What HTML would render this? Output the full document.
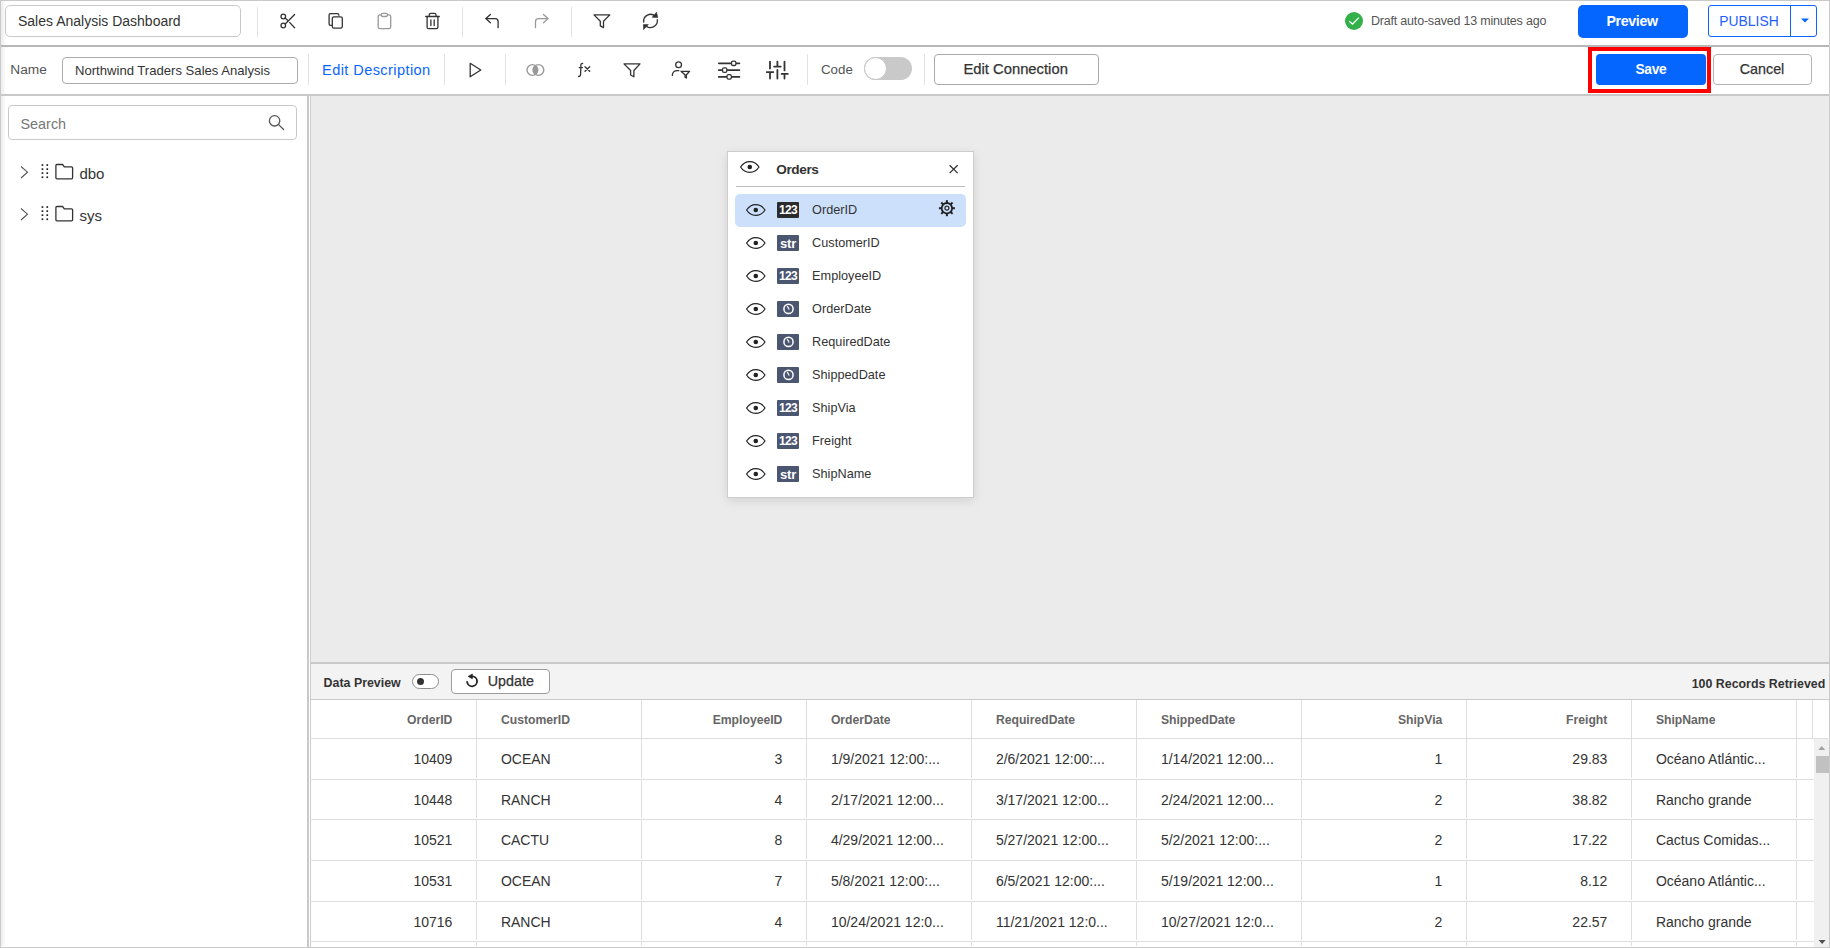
<!DOCTYPE html>
<html><head><meta charset="utf-8">
<style>
*{box-sizing:border-box;margin:0;padding:0}
html,body{width:1830px;height:948px;overflow:hidden;background:#fff;font-family:"Liberation Sans",sans-serif;color:#333}
.a{position:absolute;overflow:visible}
.t{position:absolute;white-space:nowrap;line-height:1}
</style></head><body>
<div class="a" style="left:0px;top:0px;width:1830px;height:948px;background:#fff"></div>
<div class="a" style="left:0px;top:0px;width:1830px;height:1px;background:#c9c9c9"></div>
<div class="a" style="left:0px;top:0px;width:1px;height:948px;background:#c9c9c9"></div>
<div class="a" style="left:1829px;top:0px;width:1px;height:948px;background:#c9c9c9"></div>
<div class="a" style="left:0px;top:947px;width:1830px;height:1px;background:#c9c9c9"></div>
<div class="a" style="left:1px;top:1px;width:5px;height:945px;background:linear-gradient(90deg,#ececec,#fff)"></div>
<div class="a" style="left:5px;top:5px;width:236px;height:32px;border:1px solid #c9c9c9;border-radius:5px;background:#fff"></div>
<div class="t" style="left:18.00px;top:13.95px;font-size:14px;font-weight:400;color:#333;">Sales Analysis Dashboard</div>
<div class="a" style="left:257px;top:7px;width:1px;height:30px;background:#e2e2e2"></div>
<div class="a" style="left:462px;top:7px;width:1px;height:30px;background:#e2e2e2"></div>
<div class="a" style="left:571px;top:7px;width:1px;height:30px;background:#e2e2e2"></div>
<svg class="a" style="left:276px;top:8px" width="24" height="26" viewBox="0 0 24 26"><g fill="none" stroke="#333" stroke-width="1.3" stroke-linecap="round" stroke-linejoin="round"><circle cx="7.3" cy="8.5" r="2.3"/><circle cx="7.3" cy="17.5" r="2.3"/><path d="M9.2 16 L18.6 6.5"/><path d="M9.2 10 L11.6 12.2"/><path d="M13.6 14.4 L18.6 19.7"/></g></svg>
<svg class="a" style="left:324px;top:8px" width="24" height="26" viewBox="0 0 24 26"><g fill="none" stroke="#333" stroke-width="1.3" stroke-linecap="round" stroke-linejoin="round"><path d="M7.7 17.4 H6.5 Q5.1 17.4 5.1 16 V7 Q5.1 5.7 6.4 5.7 H13.6 Q14.9 5.7 14.9 7.3"/><rect x="8.3" y="8.9" width="10" height="11.2" rx="1.6"/></g></svg>
<svg class="a" style="left:372px;top:8px" width="24" height="26" viewBox="0 0 24 26"><g fill="none" stroke="#999" stroke-width="1.3" stroke-linecap="round" stroke-linejoin="round"><rect x="6.2" y="6.8" width="12.5" height="13.9" rx="1.8"/><rect x="9.2" y="5.3" width="6.3" height="3.2" rx="1.4" fill="#fff"/></g></svg>
<svg class="a" style="left:420px;top:8px" width="24" height="26" viewBox="0 0 24 26"><g fill="none" stroke="#333" stroke-width="1.3" stroke-linecap="round" stroke-linejoin="round"><path d="M5.7 8.5 H19.3"/><path d="M9.3 8.3 V6.8 Q9.3 5.3 10.8 5.3 H14.5 Q16 5.3 16 6.8 V8.3"/><path d="M7.1 8.5 V19.2 Q7.1 20.7 8.6 20.7 H16.4 Q17.9 20.7 17.9 19.2 V8.5"/><path d="M10.9 11.8 V17.5 M14.2 11.8 V17.5"/></g></svg>
<svg class="a" style="left:480px;top:8px" width="24" height="26" viewBox="0 0 24 26"><g fill="none" stroke="#333" stroke-width="1.3" stroke-linecap="round" stroke-linejoin="round"><path d="M10.4 6.5 L5.9 10.6 L10.4 14.8"/><path d="M5.9 10.6 H15.2 Q18.1 10.6 18.1 13.5 V19.7"/></g></svg>
<svg class="a" style="left:528px;top:8px" width="24" height="26" viewBox="0 0 24 26"><g fill="none" stroke="#999" stroke-width="1.3" stroke-linecap="round" stroke-linejoin="round"><path d="M15.5 6.5 L19.9 10.6 L15.5 14.8"/><path d="M19.9 10.6 H10.5 Q7.5 10.6 7.5 13.5 V19.7"/></g></svg>
<svg class="a" style="left:592px;top:13px" width="20" height="18" viewBox="0 0 20 18"><path d="M2 1.9 H17.8 L11.5 8.3 V14.6 L8.3 12.9 V8.3 Z" fill="none" stroke="#333" stroke-width="1.3" stroke-linecap="round" stroke-linejoin="round"/></svg>
<svg class="a" style="left:640px;top:10px" width="22" height="22" viewBox="0 0 22 22"><g fill="none" stroke="#333" stroke-width="1.3" stroke-linecap="round" stroke-linejoin="round"><path d="M3.7 12.1 A6.9 6.9 0 0 1 15.2 6.2"/><path d="M17.3 9.7 A6.9 6.9 0 0 1 6 15.9"/></g><path d="M16.5 2.2 L17.8 7.5 L12.2 7.3 Z" fill="#333" stroke="#333" stroke-width="0.6" stroke-linejoin="round"/><path d="M3.6 19.6 L3.4 14.6 L8.4 14.6 Z" fill="#333" stroke="#333" stroke-width="0.6" stroke-linejoin="round"/></svg>
<div class="a" style="left:1px;top:45px;width:1828px;height:2px;background:#b8b8b8"></div>
<div class="t" style="left:10.30px;top:63.30px;font-size:13.7px;font-weight:400;color:#555;">Name</div>
<div class="a" style="left:62px;top:57px;width:236px;height:27px;border:1px solid #ababab;border-radius:4px;background:#fff"></div>
<div class="t" style="left:75.00px;top:63.81px;font-size:13.1px;font-weight:400;color:#333;">Northwind Traders Sales Analysis</div>
<div class="a" style="left:308px;top:54px;width:1px;height:31px;background:#e2e2e2"></div>
<div class="a" style="left:444px;top:54px;width:1px;height:31px;background:#e2e2e2"></div>
<div class="a" style="left:505px;top:54px;width:1px;height:31px;background:#e2e2e2"></div>
<div class="a" style="left:807px;top:54px;width:1px;height:31px;background:#e2e2e2"></div>
<div class="a" style="left:924px;top:54px;width:1px;height:31px;background:#e2e2e2"></div>
<div class="t" style="left:322.00px;top:63.04px;font-size:14.6px;font-weight:400;color:#0a66ff;letter-spacing:0.4px">Edit Description</div>
<svg class="a" style="left:466px;top:58px" width="20" height="24" viewBox="0 0 20 24"><path d="M4.2 5.3 L14.8 12 L4.2 18.8 Z" fill="none" stroke="#333" stroke-width="1.3" stroke-linecap="round" stroke-linejoin="round"/></svg>
<svg class="a" style="left:522px;top:60px" width="26" height="20" viewBox="0 0 26 20"><g fill="none" stroke="#999" stroke-width="1.4"><circle cx="10.4" cy="10" r="5.4"/><circle cx="16.4" cy="10" r="5.4"/></g><path d="M13.4 5.5 A5.4 5.4 0 0 1 13.4 14.5 A5.4 5.4 0 0 1 13.4 5.5 Z" fill="#999"/></svg>
<div class="a" style="left:577px;top:60px;width:20px;height:20px"><svg class="a" style="left:0;top:0" width="20" height="20" viewBox="0 0 20 20"><g fill="none" stroke="#333" stroke-width="1.3" stroke-linecap="round"><path d="M5.6 3.5 Q4.2 3.2 3.9 4.8 L3.6 14.2 Q3.4 16.5 1.6 16.5"/><path d="M2.2 7.6 H5.4"/><path d="M8 6.8 L12.7 11.2 M12.7 6.8 L8 11.2"/></g></svg></div>
<svg class="a" style="left:622px;top:58px" width="20" height="22" viewBox="0 0 20 22"><path d="M2 5.9 H18 L11.9 12.5 V18.8 L8.6 17 V12.5 Z" fill="none" stroke="#333" stroke-width="1.3" stroke-linecap="round" stroke-linejoin="round"/></svg>
<svg class="a" style="left:668px;top:58px" width="24" height="24" viewBox="0 0 24 24"><g fill="none" stroke="#333" stroke-width="1.3" stroke-linecap="round" stroke-linejoin="round"><circle cx="10.6" cy="6.8" r="2.9"/><path d="M4.3 17.6 Q4.3 12.7 9.5 12.7 H10.8"/><path d="M13 13.3 H21.6 L18.4 16.8 V20 L17 19.2 V16.8 Z"/></g></svg>
<svg class="a" style="left:716px;top:58px" width="26" height="24" viewBox="0 0 26 24"><g stroke="#333" stroke-width="1.8" stroke-linecap="round" fill="none"><path d="M2.8 5.3 H23.4"/><path d="M2.8 12.1 H23.4"/><path d="M2.8 18.9 H23.4"/></g><g fill="#fff" stroke="#333" stroke-width="1.3"><rect x="15.5" y="3.1" width="4.4" height="4.4" rx="1.6"/><rect x="6.5" y="9.9" width="4.4" height="4.4" rx="1.6"/><rect x="11" y="16.7" width="4.4" height="4.4" rx="1.6"/></g></svg>
<svg class="a" style="left:764px;top:58px" width="26" height="24" viewBox="0 0 26 24"><g stroke="#333" stroke-width="1.8" stroke-linecap="round" fill="none"><path d="M6 3.6 V10.6 M2.8 14.1 H9.3 M6 14.1 V20.5"/><path d="M13.4 3.6 V8.6 M10.1 8.6 H16.7 M13.4 11.9 V20.5"/><path d="M20.5 3.6 V12.4 M17.6 15.9 H23.8 M20.5 15.9 V20.5"/></g></svg>
<div class="t" style="left:821.00px;top:62.74px;font-size:13.3px;font-weight:400;color:#555;">Code</div>
<div class="a" style="left:864px;top:57px;width:48px;height:23px;border-radius:12px;background:#c9c9c9"></div>
<div class="a" style="left:864px;top:57px;width:23px;height:23px;border-radius:50%;background:#fff;border:1px solid #c4c4c4"></div>
<div class="a" style="left:934px;top:54px;width:165px;height:31px;border:1px solid #a9a9a9;border-radius:4px;background:#fff"></div>
<div class="t" style="left:963.40px;top:61.67px;font-size:14.8px;font-weight:400;color:#333;-webkit-text-stroke:0.25px #333">Edit Connection</div>
<svg class="a" style="left:1344px;top:11px" width="20" height="20" viewBox="0 0 20 20"><circle cx="10" cy="10" r="9" fill="#34b04a"/><path d="M5.2 10.3 L8.5 13.1 L14.8 6.6" fill="none" stroke="#fff" stroke-width="1.3"/></svg>
<div class="t" style="left:1371.00px;top:15.32px;font-size:12.5px;font-weight:400;color:#555;letter-spacing:-0.2px">Draft auto-saved 13 minutes ago</div>
<div class="a" style="left:1578px;top:5px;width:110px;height:33px;border-radius:5px;background:#0565ff"></div>
<div class="t" style="left:1606.50px;top:13.98px;font-size:14.2px;font-weight:700;color:#fff;letter-spacing:-0.35px">Preview</div>
<div class="a" style="left:1708px;top:5px;width:109px;height:32px;border:1px solid #0a66ff;border-radius:3px;background:#fff"></div>
<div class="a" style="left:1790px;top:5px;width:1px;height:32px;background:#0a66ff"></div>
<div class="t" style="left:1719.30px;top:14.93px;font-size:13.9px;font-weight:400;color:#1f5ef7;">PUBLISH</div>
<svg class="a" style="left:1797px;top:14px" width="14" height="12" viewBox="0 0 14 12"><path d="M4 4.6 H12 L8 8.4 Z" fill="#0565ff"/></svg>
<div class="a" style="left:1588px;top:47px;width:123px;height:46px;border:4px solid #ff0000"></div>
<div class="a" style="left:1596px;top:54px;width:110px;height:31px;border-radius:4px;background:#0565ff"></div>
<div class="t" style="left:1635.50px;top:62.92px;font-size:13.8px;font-weight:700;color:#fff;letter-spacing:-0.35px">Save</div>
<div class="a" style="left:1713px;top:54px;width:99px;height:31px;border:1px solid #b5b5b5;border-radius:4px;background:#fff"></div>
<div class="t" style="left:1739.80px;top:61.80px;font-size:14.3px;font-weight:400;color:#333;-webkit-text-stroke:0.25px #333">Cancel</div>
<div class="a" style="left:1px;top:94px;width:1828px;height:2px;background:#c8c8c8"></div>
<div class="a" style="left:307px;top:96px;width:2px;height:851px;background:#c9c9c9"></div>
<div class="a" style="left:310px;top:96px;width:1px;height:851px;background:#cdcdcd"></div>
<div class="a" style="left:8px;top:105px;width:289px;height:35px;border:1px solid #c9c9c9;border-radius:4px;background:#fff"></div>
<div class="t" style="left:20.50px;top:117.11px;font-size:14.4px;font-weight:400;color:#777;">Search</div>
<svg class="a" style="left:264px;top:110px" width="26" height="26" viewBox="0 0 26 26"><g fill="none" stroke="#555" stroke-width="1.3" stroke-linecap="round"><circle cx="10.6" cy="10.8" r="5.2"/><path d="M14.6 14.6 L19.6 19.5"/></g></svg>
<svg class="a" style="left:16px;top:160px" width="16" height="24" viewBox="0 0 16 24"><path d="M5 6.5 L11.5 12.2 L5 18" fill="none" stroke="#555" stroke-width="1.1"/></svg>
<svg class="a" style="left:0;top:0" width="60" height="240"><rect x="41.6" y="164.2" width="1.7" height="1.7" fill="#222"/><rect x="41.6" y="168.29999999999998" width="1.7" height="1.7" fill="#222"/><rect x="41.6" y="172.29999999999998" width="1.7" height="1.7" fill="#222"/><rect x="41.6" y="176.39999999999998" width="1.7" height="1.7" fill="#222"/><rect x="46.400000000000006" y="164.2" width="1.7" height="1.7" fill="#222"/><rect x="46.400000000000006" y="168.29999999999998" width="1.7" height="1.7" fill="#222"/><rect x="46.400000000000006" y="172.29999999999998" width="1.7" height="1.7" fill="#222"/><rect x="46.400000000000006" y="176.39999999999998" width="1.7" height="1.7" fill="#222"/></svg>
<svg class="a" style="left:52px;top:160px" width="24" height="24" viewBox="0 0 24 24"><path d="M3.9 17.8 V5.5 Q3.9 4.5 4.9 4.5 H10.6 L12.3 6.9 H19.6 Q20.6 6.9 20.6 7.9 V17.8 Q20.6 18.8 19.6 18.8 H4.9 Q3.9 18.8 3.9 17.8 Z" fill="none" stroke="#333" stroke-width="1.3" stroke-linejoin="round"/></svg>
<div class="t" style="left:79.40px;top:166.00px;font-size:15px;font-weight:400;color:#333;">dbo</div>
<svg class="a" style="left:16px;top:202px" width="16" height="24" viewBox="0 0 16 24"><path d="M5 6.5 L11.5 12.2 L5 18" fill="none" stroke="#555" stroke-width="1.1"/></svg>
<svg class="a" style="left:0;top:0" width="60" height="240"><rect x="41.6" y="206.2" width="1.7" height="1.7" fill="#222"/><rect x="41.6" y="210.29999999999998" width="1.7" height="1.7" fill="#222"/><rect x="41.6" y="214.29999999999998" width="1.7" height="1.7" fill="#222"/><rect x="41.6" y="218.39999999999998" width="1.7" height="1.7" fill="#222"/><rect x="46.400000000000006" y="206.2" width="1.7" height="1.7" fill="#222"/><rect x="46.400000000000006" y="210.29999999999998" width="1.7" height="1.7" fill="#222"/><rect x="46.400000000000006" y="214.29999999999998" width="1.7" height="1.7" fill="#222"/><rect x="46.400000000000006" y="218.39999999999998" width="1.7" height="1.7" fill="#222"/></svg>
<svg class="a" style="left:52px;top:202px" width="24" height="24" viewBox="0 0 24 24"><path d="M3.9 17.8 V5.5 Q3.9 4.5 4.9 4.5 H10.6 L12.3 6.9 H19.6 Q20.6 6.9 20.6 7.9 V17.8 Q20.6 18.8 19.6 18.8 H4.9 Q3.9 18.8 3.9 17.8 Z" fill="none" stroke="#333" stroke-width="1.3" stroke-linejoin="round"/></svg>
<div class="t" style="left:79.40px;top:208.10px;font-size:15px;font-weight:400;color:#333;">sys</div>
<div class="a" style="left:311px;top:96px;width:1518px;height:566px;background:#ebebeb"></div>
<div class="a" style="left:727px;top:151px;width:247px;height:347px;background:#fff;border:1px solid #cdcdcd;box-shadow:0 3px 10px rgba(0,0,0,0.10)"></div>
<svg class="a" style="left:740px;top:161px" width="20" height="12" viewBox="0 0 20 12"><g fill="none" stroke="#222" stroke-width="1.2"><path d="M0.6 6 C3.5 1.4 6.5 0.6 9.8 0.6 C13.1 0.6 16.1 1.4 19 6 C16.1 10.6 13.1 11.4 9.8 11.4 C6.5 11.4 3.5 10.6 0.6 6 Z"/></g><circle cx="9.8" cy="6" r="2.3" fill="#222"/></svg>
<div class="t" style="left:776.30px;top:163.39px;font-size:13.6px;font-weight:700;color:#333;letter-spacing:-0.4px">Orders</div>
<svg class="a" style="left:944px;top:160px" width="20" height="20" viewBox="0 0 20 20"><path d="M5.6 5.3 L13.7 13.1 M13.7 5.3 L5.6 13.1" fill="none" stroke="#333" stroke-width="1.3"/></svg>
<div class="a" style="left:736px;top:186px;width:229px;height:1px;background:#b9bdbd"></div>
<div class="a" style="left:735px;top:194px;width:231px;height:33px;background:#cce0fc;border-radius:5px"></div>
<svg class="a" style="left:746px;top:203.8px" width="20" height="12" viewBox="0 0 20 12"><g fill="none" stroke="#222" stroke-width="1.2"><path d="M0.6 6 C3.5 1.4 6.5 0.6 9.8 0.6 C13.1 0.6 16.1 1.4 19 6 C16.1 10.6 13.1 11.4 9.8 11.4 C6.5 11.4 3.5 10.6 0.6 6 Z"/></g><circle cx="9.8" cy="6" r="2.3" fill="#222"/></svg>
<div class="a" style="left:777px;top:202px;width:22px;height:16px;background:#2b2b2b;border-radius:1px"></div>
<div class="t" style="left:777.00px;top:204.44px;font-size:12px;font-weight:700;color:#fff;width:22px;text-align:center;letter-spacing:-0.7px">123</div>
<div class="t" style="left:812.10px;top:203.55px;font-size:12.7px;font-weight:400;color:#333;">OrderID</div>
<svg class="a" style="left:746px;top:236.8px" width="20" height="12" viewBox="0 0 20 12"><g fill="none" stroke="#222" stroke-width="1.2"><path d="M0.6 6 C3.5 1.4 6.5 0.6 9.8 0.6 C13.1 0.6 16.1 1.4 19 6 C16.1 10.6 13.1 11.4 9.8 11.4 C6.5 11.4 3.5 10.6 0.6 6 Z"/></g><circle cx="9.8" cy="6" r="2.3" fill="#222"/></svg>
<div class="a" style="left:777px;top:235px;width:22px;height:16px;background:#4b5671;border-radius:1px"></div>
<div class="t" style="left:777.00px;top:236.60px;font-size:13px;font-weight:700;color:#fff;width:22px;text-align:center;letter-spacing:-0.2px">str</div>
<div class="t" style="left:812.10px;top:236.55px;font-size:12.7px;font-weight:400;color:#333;">CustomerID</div>
<svg class="a" style="left:746px;top:269.8px" width="20" height="12" viewBox="0 0 20 12"><g fill="none" stroke="#222" stroke-width="1.2"><path d="M0.6 6 C3.5 1.4 6.5 0.6 9.8 0.6 C13.1 0.6 16.1 1.4 19 6 C16.1 10.6 13.1 11.4 9.8 11.4 C6.5 11.4 3.5 10.6 0.6 6 Z"/></g><circle cx="9.8" cy="6" r="2.3" fill="#222"/></svg>
<div class="a" style="left:777px;top:268px;width:22px;height:16px;background:#4b5671;border-radius:1px"></div>
<div class="t" style="left:777.00px;top:270.44px;font-size:12px;font-weight:700;color:#fff;width:22px;text-align:center;letter-spacing:-0.7px">123</div>
<div class="t" style="left:812.10px;top:269.55px;font-size:12.7px;font-weight:400;color:#333;">EmployeeID</div>
<svg class="a" style="left:746px;top:302.8px" width="20" height="12" viewBox="0 0 20 12"><g fill="none" stroke="#222" stroke-width="1.2"><path d="M0.6 6 C3.5 1.4 6.5 0.6 9.8 0.6 C13.1 0.6 16.1 1.4 19 6 C16.1 10.6 13.1 11.4 9.8 11.4 C6.5 11.4 3.5 10.6 0.6 6 Z"/></g><circle cx="9.8" cy="6" r="2.3" fill="#222"/></svg>
<div class="a" style="left:777px;top:301px;width:22px;height:16px;background:#4b5671;border-radius:1px"></div>
<svg class="a" style="left:777px;top:301px" width="22" height="16" viewBox="0 0 22 16"><circle cx="11.5" cy="7.9" r="4.6" fill="none" stroke="#fff" stroke-width="1.5"/><path d="M10.2 5 L12.2 8.5" stroke="#fff" stroke-width="1.2"/></svg>
<div class="t" style="left:812.10px;top:302.55px;font-size:12.7px;font-weight:400;color:#333;">OrderDate</div>
<svg class="a" style="left:746px;top:335.8px" width="20" height="12" viewBox="0 0 20 12"><g fill="none" stroke="#222" stroke-width="1.2"><path d="M0.6 6 C3.5 1.4 6.5 0.6 9.8 0.6 C13.1 0.6 16.1 1.4 19 6 C16.1 10.6 13.1 11.4 9.8 11.4 C6.5 11.4 3.5 10.6 0.6 6 Z"/></g><circle cx="9.8" cy="6" r="2.3" fill="#222"/></svg>
<div class="a" style="left:777px;top:334px;width:22px;height:16px;background:#4b5671;border-radius:1px"></div>
<svg class="a" style="left:777px;top:334px" width="22" height="16" viewBox="0 0 22 16"><circle cx="11.5" cy="7.9" r="4.6" fill="none" stroke="#fff" stroke-width="1.5"/><path d="M10.2 5 L12.2 8.5" stroke="#fff" stroke-width="1.2"/></svg>
<div class="t" style="left:812.10px;top:335.55px;font-size:12.7px;font-weight:400;color:#333;">RequiredDate</div>
<svg class="a" style="left:746px;top:368.8px" width="20" height="12" viewBox="0 0 20 12"><g fill="none" stroke="#222" stroke-width="1.2"><path d="M0.6 6 C3.5 1.4 6.5 0.6 9.8 0.6 C13.1 0.6 16.1 1.4 19 6 C16.1 10.6 13.1 11.4 9.8 11.4 C6.5 11.4 3.5 10.6 0.6 6 Z"/></g><circle cx="9.8" cy="6" r="2.3" fill="#222"/></svg>
<div class="a" style="left:777px;top:367px;width:22px;height:16px;background:#4b5671;border-radius:1px"></div>
<svg class="a" style="left:777px;top:367px" width="22" height="16" viewBox="0 0 22 16"><circle cx="11.5" cy="7.9" r="4.6" fill="none" stroke="#fff" stroke-width="1.5"/><path d="M10.2 5 L12.2 8.5" stroke="#fff" stroke-width="1.2"/></svg>
<div class="t" style="left:812.10px;top:368.55px;font-size:12.7px;font-weight:400;color:#333;">ShippedDate</div>
<svg class="a" style="left:746px;top:401.8px" width="20" height="12" viewBox="0 0 20 12"><g fill="none" stroke="#222" stroke-width="1.2"><path d="M0.6 6 C3.5 1.4 6.5 0.6 9.8 0.6 C13.1 0.6 16.1 1.4 19 6 C16.1 10.6 13.1 11.4 9.8 11.4 C6.5 11.4 3.5 10.6 0.6 6 Z"/></g><circle cx="9.8" cy="6" r="2.3" fill="#222"/></svg>
<div class="a" style="left:777px;top:400px;width:22px;height:16px;background:#4b5671;border-radius:1px"></div>
<div class="t" style="left:777.00px;top:402.44px;font-size:12px;font-weight:700;color:#fff;width:22px;text-align:center;letter-spacing:-0.7px">123</div>
<div class="t" style="left:812.10px;top:401.55px;font-size:12.7px;font-weight:400;color:#333;">ShipVia</div>
<svg class="a" style="left:746px;top:434.8px" width="20" height="12" viewBox="0 0 20 12"><g fill="none" stroke="#222" stroke-width="1.2"><path d="M0.6 6 C3.5 1.4 6.5 0.6 9.8 0.6 C13.1 0.6 16.1 1.4 19 6 C16.1 10.6 13.1 11.4 9.8 11.4 C6.5 11.4 3.5 10.6 0.6 6 Z"/></g><circle cx="9.8" cy="6" r="2.3" fill="#222"/></svg>
<div class="a" style="left:777px;top:433px;width:22px;height:16px;background:#4b5671;border-radius:1px"></div>
<div class="t" style="left:777.00px;top:435.44px;font-size:12px;font-weight:700;color:#fff;width:22px;text-align:center;letter-spacing:-0.7px">123</div>
<div class="t" style="left:812.10px;top:434.55px;font-size:12.7px;font-weight:400;color:#333;">Freight</div>
<svg class="a" style="left:746px;top:467.8px" width="20" height="12" viewBox="0 0 20 12"><g fill="none" stroke="#222" stroke-width="1.2"><path d="M0.6 6 C3.5 1.4 6.5 0.6 9.8 0.6 C13.1 0.6 16.1 1.4 19 6 C16.1 10.6 13.1 11.4 9.8 11.4 C6.5 11.4 3.5 10.6 0.6 6 Z"/></g><circle cx="9.8" cy="6" r="2.3" fill="#222"/></svg>
<div class="a" style="left:777px;top:466px;width:22px;height:16px;background:#4b5671;border-radius:1px"></div>
<div class="t" style="left:777.00px;top:467.60px;font-size:13px;font-weight:700;color:#fff;width:22px;text-align:center;letter-spacing:-0.2px">str</div>
<div class="t" style="left:812.10px;top:467.55px;font-size:12.7px;font-weight:400;color:#333;">ShipName</div>
<svg class="a" style="left:0;top:0" width="1000" height="240"><g transform="translate(946.9 208.2)"><rect x="-1" y="-8" width="2" height="3" fill="#222" transform="rotate(0)"/><rect x="-1" y="-8" width="2" height="3" fill="#222" transform="rotate(45)"/><rect x="-1" y="-8" width="2" height="3" fill="#222" transform="rotate(90)"/><rect x="-1" y="-8" width="2" height="3" fill="#222" transform="rotate(135)"/><rect x="-1" y="-8" width="2" height="3" fill="#222" transform="rotate(180)"/><rect x="-1" y="-8" width="2" height="3" fill="#222" transform="rotate(225)"/><rect x="-1" y="-8" width="2" height="3" fill="#222" transform="rotate(270)"/><rect x="-1" y="-8" width="2" height="3" fill="#222" transform="rotate(315)"/><circle r="5.2" fill="none" stroke="#222" stroke-width="1.8"/><circle r="2" fill="none" stroke="#222" stroke-width="1.2"/></g></svg>
<div class="a" style="left:311px;top:662px;width:1518px;height:2px;background:#c9c9c9"></div>
<div class="a" style="left:311px;top:664px;width:1518px;height:35px;background:#f3f3f3"></div>
<div class="t" style="left:323.60px;top:676.50px;font-size:12.4px;font-weight:700;color:#333;">Data Preview</div>
<div class="a" style="left:412px;top:674px;width:27px;height:15px;border:1px solid #8d8d8d;border-radius:8px;background:#fff"></div>
<div class="a" style="left:417px;top:678px;width:7.4px;height:7.4px;border-radius:50%;background:#333"></div>
<div class="a" style="left:451px;top:669px;width:99px;height:25px;border:1px solid #9d9d9d;border-radius:4px;background:#fff"></div>
<svg class="a" style="left:462px;top:671px" width="20" height="20" viewBox="0 0 20 20"><path d="M5.1 10.9 A5 5 0 1 0 10.3 5.3" fill="none" stroke="#222" stroke-width="1.8" stroke-linecap="round"/><path d="M6.2 5.4 L10.3 3 L10.3 7.8 Z" fill="#222" stroke="#222" stroke-width="0.7" stroke-linejoin="round"/></svg>
<div class="t" style="left:487.80px;top:673.90px;font-size:14.3px;font-weight:400;color:#333;-webkit-text-stroke:0.25px #333">Update</div>
<div class="t" style="left:825.30px;width:1000px;text-align:right;top:677.50px;font-size:12.4px;font-weight:700;color:#333;">100 Records Retrieved</div>
<div class="a" style="left:311px;top:699px;width:1518px;height:1px;background:#cbcbcb"></div>
<div class="a" style="left:310px;top:738px;width:1504px;height:1px;background:#dedede"></div>
<div class="a" style="left:1813px;top:738px;width:15px;height:1px;background:#dedede"></div>
<div class="a" style="left:476px;top:700px;width:1px;height:38px;background:#dedede"></div>
<div class="t" style="left:-547.60px;width:1000px;text-align:right;top:713.67px;font-size:12.2px;font-weight:700;color:#666;">OrderID</div>
<div class="a" style="left:641px;top:700px;width:1px;height:38px;background:#dedede"></div>
<div class="t" style="left:500.90px;top:713.67px;font-size:12.2px;font-weight:700;color:#666;">CustomerID</div>
<div class="a" style="left:806px;top:700px;width:1px;height:38px;background:#dedede"></div>
<div class="t" style="left:-217.60px;width:1000px;text-align:right;top:713.67px;font-size:12.2px;font-weight:700;color:#666;">EmployeeID</div>
<div class="a" style="left:971px;top:700px;width:1px;height:38px;background:#dedede"></div>
<div class="t" style="left:830.90px;top:713.67px;font-size:12.2px;font-weight:700;color:#666;">OrderDate</div>
<div class="a" style="left:1136px;top:700px;width:1px;height:38px;background:#dedede"></div>
<div class="t" style="left:995.90px;top:713.67px;font-size:12.2px;font-weight:700;color:#666;">RequiredDate</div>
<div class="a" style="left:1301px;top:700px;width:1px;height:38px;background:#dedede"></div>
<div class="t" style="left:1160.90px;top:713.67px;font-size:12.2px;font-weight:700;color:#666;">ShippedDate</div>
<div class="a" style="left:1466px;top:700px;width:1px;height:38px;background:#dedede"></div>
<div class="t" style="left:442.40px;width:1000px;text-align:right;top:713.67px;font-size:12.2px;font-weight:700;color:#666;">ShipVia</div>
<div class="a" style="left:1631px;top:700px;width:1px;height:38px;background:#dedede"></div>
<div class="t" style="left:607.40px;width:1000px;text-align:right;top:713.67px;font-size:12.2px;font-weight:700;color:#666;">Freight</div>
<div class="a" style="left:1796px;top:700px;width:1px;height:38px;background:#dedede"></div>
<div class="t" style="left:1655.90px;top:713.67px;font-size:12.2px;font-weight:700;color:#666;">ShipName</div>
<div class="a" style="left:1812px;top:700px;width:1px;height:38px;background:#dedede"></div>
<div class="a" style="left:310px;top:779px;width:1504px;height:1px;background:#dedede"></div>
<div class="a" style="left:476px;top:739px;width:1px;height:39px;background:#dedede"></div>
<div class="t" style="left:-547.60px;width:1000px;text-align:right;top:752.15px;font-size:14px;font-weight:400;color:#333;">10409</div>
<div class="a" style="left:641px;top:739px;width:1px;height:39px;background:#dedede"></div>
<div class="t" style="left:500.90px;top:752.15px;font-size:14px;font-weight:400;color:#333;">OCEAN</div>
<div class="a" style="left:806px;top:739px;width:1px;height:39px;background:#dedede"></div>
<div class="t" style="left:-217.60px;width:1000px;text-align:right;top:752.15px;font-size:14px;font-weight:400;color:#333;">3</div>
<div class="a" style="left:971px;top:739px;width:1px;height:39px;background:#dedede"></div>
<div class="t" style="left:830.90px;top:752.15px;font-size:14px;font-weight:400;color:#333;">1/9/2021 12:00:...</div>
<div class="a" style="left:1136px;top:739px;width:1px;height:39px;background:#dedede"></div>
<div class="t" style="left:995.90px;top:752.15px;font-size:14px;font-weight:400;color:#333;">2/6/2021 12:00:...</div>
<div class="a" style="left:1301px;top:739px;width:1px;height:39px;background:#dedede"></div>
<div class="t" style="left:1160.90px;top:752.15px;font-size:14px;font-weight:400;color:#333;">1/14/2021 12:00...</div>
<div class="a" style="left:1466px;top:739px;width:1px;height:39px;background:#dedede"></div>
<div class="t" style="left:442.40px;width:1000px;text-align:right;top:752.15px;font-size:14px;font-weight:400;color:#333;">1</div>
<div class="a" style="left:1631px;top:739px;width:1px;height:39px;background:#dedede"></div>
<div class="t" style="left:607.40px;width:1000px;text-align:right;top:752.15px;font-size:14px;font-weight:400;color:#333;">29.83</div>
<div class="a" style="left:1796px;top:739px;width:1px;height:39px;background:#dedede"></div>
<div class="t" style="left:1655.90px;top:752.15px;font-size:14px;font-weight:400;color:#333;">Océano Atlántic...</div>
<div class="a" style="left:310px;top:819px;width:1504px;height:1px;background:#dedede"></div>
<div class="a" style="left:476px;top:780px;width:1px;height:38px;background:#dedede"></div>
<div class="t" style="left:-547.60px;width:1000px;text-align:right;top:792.75px;font-size:14px;font-weight:400;color:#333;">10448</div>
<div class="a" style="left:641px;top:780px;width:1px;height:38px;background:#dedede"></div>
<div class="t" style="left:500.90px;top:792.75px;font-size:14px;font-weight:400;color:#333;">RANCH</div>
<div class="a" style="left:806px;top:780px;width:1px;height:38px;background:#dedede"></div>
<div class="t" style="left:-217.60px;width:1000px;text-align:right;top:792.75px;font-size:14px;font-weight:400;color:#333;">4</div>
<div class="a" style="left:971px;top:780px;width:1px;height:38px;background:#dedede"></div>
<div class="t" style="left:830.90px;top:792.75px;font-size:14px;font-weight:400;color:#333;">2/17/2021 12:00...</div>
<div class="a" style="left:1136px;top:780px;width:1px;height:38px;background:#dedede"></div>
<div class="t" style="left:995.90px;top:792.75px;font-size:14px;font-weight:400;color:#333;">3/17/2021 12:00...</div>
<div class="a" style="left:1301px;top:780px;width:1px;height:38px;background:#dedede"></div>
<div class="t" style="left:1160.90px;top:792.75px;font-size:14px;font-weight:400;color:#333;">2/24/2021 12:00...</div>
<div class="a" style="left:1466px;top:780px;width:1px;height:38px;background:#dedede"></div>
<div class="t" style="left:442.40px;width:1000px;text-align:right;top:792.75px;font-size:14px;font-weight:400;color:#333;">2</div>
<div class="a" style="left:1631px;top:780px;width:1px;height:38px;background:#dedede"></div>
<div class="t" style="left:607.40px;width:1000px;text-align:right;top:792.75px;font-size:14px;font-weight:400;color:#333;">38.82</div>
<div class="a" style="left:1796px;top:780px;width:1px;height:38px;background:#dedede"></div>
<div class="t" style="left:1655.90px;top:792.75px;font-size:14px;font-weight:400;color:#333;">Rancho grande</div>
<div class="a" style="left:310px;top:860px;width:1504px;height:1px;background:#dedede"></div>
<div class="a" style="left:476px;top:820px;width:1px;height:39px;background:#dedede"></div>
<div class="t" style="left:-547.60px;width:1000px;text-align:right;top:833.35px;font-size:14px;font-weight:400;color:#333;">10521</div>
<div class="a" style="left:641px;top:820px;width:1px;height:39px;background:#dedede"></div>
<div class="t" style="left:500.90px;top:833.35px;font-size:14px;font-weight:400;color:#333;">CACTU</div>
<div class="a" style="left:806px;top:820px;width:1px;height:39px;background:#dedede"></div>
<div class="t" style="left:-217.60px;width:1000px;text-align:right;top:833.35px;font-size:14px;font-weight:400;color:#333;">8</div>
<div class="a" style="left:971px;top:820px;width:1px;height:39px;background:#dedede"></div>
<div class="t" style="left:830.90px;top:833.35px;font-size:14px;font-weight:400;color:#333;">4/29/2021 12:00...</div>
<div class="a" style="left:1136px;top:820px;width:1px;height:39px;background:#dedede"></div>
<div class="t" style="left:995.90px;top:833.35px;font-size:14px;font-weight:400;color:#333;">5/27/2021 12:00...</div>
<div class="a" style="left:1301px;top:820px;width:1px;height:39px;background:#dedede"></div>
<div class="t" style="left:1160.90px;top:833.35px;font-size:14px;font-weight:400;color:#333;">5/2/2021 12:00:...</div>
<div class="a" style="left:1466px;top:820px;width:1px;height:39px;background:#dedede"></div>
<div class="t" style="left:442.40px;width:1000px;text-align:right;top:833.35px;font-size:14px;font-weight:400;color:#333;">2</div>
<div class="a" style="left:1631px;top:820px;width:1px;height:39px;background:#dedede"></div>
<div class="t" style="left:607.40px;width:1000px;text-align:right;top:833.35px;font-size:14px;font-weight:400;color:#333;">17.22</div>
<div class="a" style="left:1796px;top:820px;width:1px;height:39px;background:#dedede"></div>
<div class="t" style="left:1655.90px;top:833.35px;font-size:14px;font-weight:400;color:#333;">Cactus Comidas...</div>
<div class="a" style="left:310px;top:901px;width:1504px;height:1px;background:#dedede"></div>
<div class="a" style="left:476px;top:861px;width:1px;height:39px;background:#dedede"></div>
<div class="t" style="left:-547.60px;width:1000px;text-align:right;top:873.95px;font-size:14px;font-weight:400;color:#333;">10531</div>
<div class="a" style="left:641px;top:861px;width:1px;height:39px;background:#dedede"></div>
<div class="t" style="left:500.90px;top:873.95px;font-size:14px;font-weight:400;color:#333;">OCEAN</div>
<div class="a" style="left:806px;top:861px;width:1px;height:39px;background:#dedede"></div>
<div class="t" style="left:-217.60px;width:1000px;text-align:right;top:873.95px;font-size:14px;font-weight:400;color:#333;">7</div>
<div class="a" style="left:971px;top:861px;width:1px;height:39px;background:#dedede"></div>
<div class="t" style="left:830.90px;top:873.95px;font-size:14px;font-weight:400;color:#333;">5/8/2021 12:00:...</div>
<div class="a" style="left:1136px;top:861px;width:1px;height:39px;background:#dedede"></div>
<div class="t" style="left:995.90px;top:873.95px;font-size:14px;font-weight:400;color:#333;">6/5/2021 12:00:...</div>
<div class="a" style="left:1301px;top:861px;width:1px;height:39px;background:#dedede"></div>
<div class="t" style="left:1160.90px;top:873.95px;font-size:14px;font-weight:400;color:#333;">5/19/2021 12:00...</div>
<div class="a" style="left:1466px;top:861px;width:1px;height:39px;background:#dedede"></div>
<div class="t" style="left:442.40px;width:1000px;text-align:right;top:873.95px;font-size:14px;font-weight:400;color:#333;">1</div>
<div class="a" style="left:1631px;top:861px;width:1px;height:39px;background:#dedede"></div>
<div class="t" style="left:607.40px;width:1000px;text-align:right;top:873.95px;font-size:14px;font-weight:400;color:#333;">8.12</div>
<div class="a" style="left:1796px;top:861px;width:1px;height:39px;background:#dedede"></div>
<div class="t" style="left:1655.90px;top:873.95px;font-size:14px;font-weight:400;color:#333;">Océano Atlántic...</div>
<div class="a" style="left:310px;top:941px;width:1504px;height:1px;background:#dedede"></div>
<div class="a" style="left:476px;top:902px;width:1px;height:38px;background:#dedede"></div>
<div class="t" style="left:-547.60px;width:1000px;text-align:right;top:914.55px;font-size:14px;font-weight:400;color:#333;">10716</div>
<div class="a" style="left:641px;top:902px;width:1px;height:38px;background:#dedede"></div>
<div class="t" style="left:500.90px;top:914.55px;font-size:14px;font-weight:400;color:#333;">RANCH</div>
<div class="a" style="left:806px;top:902px;width:1px;height:38px;background:#dedede"></div>
<div class="t" style="left:-217.60px;width:1000px;text-align:right;top:914.55px;font-size:14px;font-weight:400;color:#333;">4</div>
<div class="a" style="left:971px;top:902px;width:1px;height:38px;background:#dedede"></div>
<div class="t" style="left:830.90px;top:914.55px;font-size:14px;font-weight:400;color:#333;">10/24/2021 12:0...</div>
<div class="a" style="left:1136px;top:902px;width:1px;height:38px;background:#dedede"></div>
<div class="t" style="left:995.90px;top:914.55px;font-size:14px;font-weight:400;color:#333;">11/21/2021 12:0...</div>
<div class="a" style="left:1301px;top:902px;width:1px;height:38px;background:#dedede"></div>
<div class="t" style="left:1160.90px;top:914.55px;font-size:14px;font-weight:400;color:#333;">10/27/2021 12:0...</div>
<div class="a" style="left:1466px;top:902px;width:1px;height:38px;background:#dedede"></div>
<div class="t" style="left:442.40px;width:1000px;text-align:right;top:914.55px;font-size:14px;font-weight:400;color:#333;">2</div>
<div class="a" style="left:1631px;top:902px;width:1px;height:38px;background:#dedede"></div>
<div class="t" style="left:607.40px;width:1000px;text-align:right;top:914.55px;font-size:14px;font-weight:400;color:#333;">22.57</div>
<div class="a" style="left:1796px;top:902px;width:1px;height:38px;background:#dedede"></div>
<div class="t" style="left:1655.90px;top:914.55px;font-size:14px;font-weight:400;color:#333;">Rancho grande</div>
<div class="a" style="left:476px;top:942px;width:1px;height:4px;background:#dedede"></div>
<div class="a" style="left:641px;top:942px;width:1px;height:4px;background:#dedede"></div>
<div class="a" style="left:806px;top:942px;width:1px;height:4px;background:#dedede"></div>
<div class="a" style="left:971px;top:942px;width:1px;height:4px;background:#dedede"></div>
<div class="a" style="left:1136px;top:942px;width:1px;height:4px;background:#dedede"></div>
<div class="a" style="left:1301px;top:942px;width:1px;height:4px;background:#dedede"></div>
<div class="a" style="left:1466px;top:942px;width:1px;height:4px;background:#dedede"></div>
<div class="a" style="left:1631px;top:942px;width:1px;height:4px;background:#dedede"></div>
<div class="a" style="left:1796px;top:942px;width:1px;height:4px;background:#dedede"></div>
<div class="a" style="left:1814px;top:739px;width:15px;height:208px;background:#f0f0f0"></div>
<svg class="a" style="left:1814px;top:742px" width="15" height="10" viewBox="0 0 15 10"><path d="M4.2 8 H11.2 L7.7 4 Z" fill="#a3a3a3"/></svg>
<div class="a" style="left:1816px;top:756px;width:13px;height:17px;background:#c1c1c1"></div>
<svg class="a" style="left:1814px;top:936px" width="15" height="10" viewBox="0 0 15 10"><path d="M4.6 3.9 H11.6 L8.1 7.9 Z" fill="#505050"/></svg>
</body></html>
